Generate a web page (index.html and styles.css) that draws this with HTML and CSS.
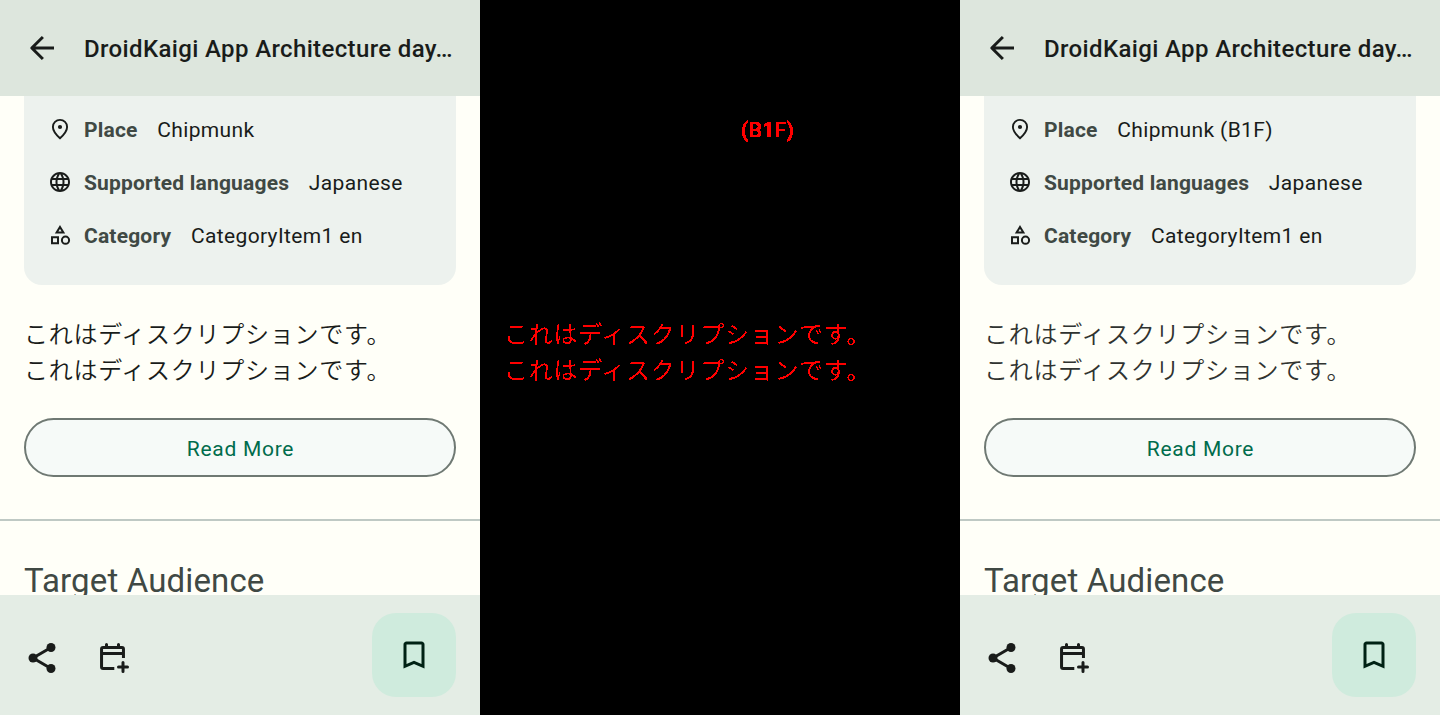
FILE: index.html
```html
<!DOCTYPE html>
<html lang="ja">
<head>
<meta charset="utf-8">
<title>DroidKaigi App Architecture day</title>
<link rel="stylesheet" href="styles.css">
</head>
<body>
<svg class="defs" width="0" height="0" aria-hidden="true">
  <defs>
    <filter id="hard" x="-5%" y="-20%" width="110%" height="140%">
      <feComponentTransfer><feFuncA type="discrete" tableValues="0 0 0 0 1 1 1 1 1 1"/></feComponentTransfer>
    </filter>
    <filter id="bold" x="-5%" y="-20%" width="110%" height="140%">
      <feComponentTransfer><feFuncA type="discrete" tableValues="0 1 1 1 1 1 1 1 1 1 1 1 1 1 1 1 1 1 1 1 1 1 1 1 1"/></feComponentTransfer>
    </filter>
    <symbol id="back" viewBox="0 0 24 24"><path d="M20 12H5.4M12.6 4.7L5.2 12l7.4 7.3" fill="none" stroke="currentColor" stroke-width="2" stroke-linejoin="round"/></symbol>
    <symbol id="place" viewBox="0 0 24 24"><path d="M12 21.2C7.5 17.1 4.9 13.4 4.9 9.9C4.9 5.7 8.1 2.9 12 2.9s7.1 2.8 7.1 7C19.1 13.4 16.5 17.1 12 21.2z" fill="none" stroke="currentColor" stroke-width="1.9"/><circle cx="12" cy="10" r="2.1" fill="currentColor"/></symbol>
    <symbol id="globe" viewBox="0 0 24 24"><path d="M11.99 2C6.47 2 2 6.48 2 12s4.47 10 9.99 10C17.52 22 22 17.52 22 12S17.52 2 11.99 2zm6.93 6h-2.95c-.32-1.25-.78-2.45-1.38-3.56 1.84.63 3.37 1.91 4.33 3.56zM12 4.04c.83 1.2 1.48 2.53 1.91 3.96h-3.82c.43-1.43 1.08-2.76 1.91-3.96zM4.26 14C4.1 13.36 4 12.69 4 12s.1-1.36.26-2h3.38c-.08.66-.14 1.32-.14 2s.06 1.34.14 2H4.26zm.82 2h2.95c.32 1.25.78 2.45 1.38 3.56-1.84-.63-3.37-1.9-4.33-3.56zm2.95-8H5.08c.96-1.66 2.49-2.93 4.33-3.56C8.81 5.55 8.35 6.75 8.03 8zM12 19.96c-.83-1.2-1.48-2.53-1.91-3.96h3.82c-.43 1.43-1.08 2.76-1.91 3.96zM14.34 14H9.66c-.09-.66-.16-1.32-.16-2s.07-1.35.16-2h4.68c.09.65.16 1.32.16 2s-.07 1.34-.16 2zm.25 5.56c.6-1.11 1.06-2.31 1.38-3.56h2.95c-.96 1.65-2.49 2.93-4.33 3.56zM16.36 14c.08-.66.14-1.32.14-2s-.06-1.34-.14-2h3.38c.16.64.26 1.31.26 2s-.1 1.36-.26 2h-3.38z" fill="currentColor"/></symbol>
    <symbol id="category" viewBox="0 0 24 24"><path d="M12 3.9L15.4 9.6H8.6zM4 14.2h6v6H4z" fill="none" stroke="currentColor" stroke-width="2"/><circle cx="17.5" cy="17.2" r="3.6" fill="none" stroke="currentColor" stroke-width="2"/></symbol>
    <symbol id="share" viewBox="0 0 24 24"><path d="M18 5L6 12l12 7" fill="none" stroke="currentColor" stroke-width="2"/><circle cx="18" cy="5" r="3" fill="currentColor"/><circle cx="6" cy="12" r="3" fill="currentColor"/><circle cx="18" cy="19" r="3" fill="currentColor"/></symbol>
    <symbol id="calendar" viewBox="0 0 24 24"><g fill="none" stroke="currentColor" stroke-width="2"><path d="M12.2 19H4.7Q3.7 19 3.7 18V6Q3.7 5 4.7 5H17.3Q18.3 5 18.3 6V12M3.7 9H18.3"/><path d="M7 5V3M15 5V3M18 15V21M15 18H21" stroke-linecap="round"/></g></symbol>
    <symbol id="bookmark" viewBox="0 0 24 24"><path d="M17 3H7c-1.1 0-2 .9-2 2v16l7-3 7 3V5c0-1.1-.9-2-2-2zm0 15l-5-2.18L7 18V5h10v13z" fill="currentColor"/></symbol>
  </defs>
</svg>
<main class="board">
  <section class="screen">
    <header class="topbar"><svg class="icon"><use href="#back"/></svg><h1 class="title">DroidKaigi App Architecture day…</h1></header>
    <div class="content">
      <div class="card">
        <div class="row"><svg class="mini"><use href="#place"/></svg><b class="label">Place</b><span>Chipmunk</span></div>
        <div class="row"><svg class="mini"><use href="#globe"/></svg><b class="label">Supported languages</b><span>Japanese</span></div>
        <div class="row"><svg class="mini"><use href="#category"/></svg><b class="label">Category</b><span>CategoryItem1 en</span></div>
      </div>
      <p class="description">これはディスクリプションです。<br>これはディスクリプションです。</p>
      <button class="more">Read More</button>
      <hr class="divider">
      <h2 class="heading">Target Audience</h2>
    </div>
    <footer class="bottombar"><svg class="icon"><use href="#share"/></svg><svg class="icon"><use href="#calendar"/></svg><span class="fab"><svg class="icon"><use href="#bookmark"/></svg></span></footer>
  </section>
  <section class="screen diff">
    <div class="diff-place">(B1F)</div>
    <p class="description diff-text">これはディスクリプションです。<br>これはディスクリプションです。</p>
  </section>
  <section class="screen">
    <header class="topbar"><svg class="icon"><use href="#back"/></svg><h1 class="title">DroidKaigi App Architecture day…</h1></header>
    <div class="content">
      <div class="card">
        <div class="row"><svg class="mini"><use href="#place"/></svg><b class="label">Place</b><span>Chipmunk (B1F)</span></div>
        <div class="row"><svg class="mini"><use href="#globe"/></svg><b class="label">Supported languages</b><span>Japanese</span></div>
        <div class="row"><svg class="mini"><use href="#category"/></svg><b class="label">Category</b><span>CategoryItem1 en</span></div>
      </div>
      <p class="description soft">これはディスクリプションです。<br>これはディスクリプションです。</p>
      <button class="more">Read More</button>
      <hr class="divider">
      <h2 class="heading">Target Audience</h2>
    </div>
    <footer class="bottombar"><svg class="icon"><use href="#share"/></svg><svg class="icon"><use href="#calendar"/></svg><span class="fab"><svg class="icon"><use href="#bookmark"/></svg></span></footer>
  </section>
</main>
</body>
</html>
```
FILE: styles.css
```css
* { box-sizing: border-box; }
body { margin: 0; font-family: Roboto, "Noto Sans CJK JP", sans-serif; color: #191c1a; overflow: hidden; }
.defs { display: block; }
.board { display: grid; grid-template-columns: repeat(3, 480px); height: 715px; }
.screen { display: flex; flex-direction: column; height: 715px; background: #fffff8; overflow: hidden; }
.topbar { flex: none; display: flex; align-items: center; gap: 24px; height: 96px; padding: 0 24px; background: #dde6dd; }
.icon { flex: none; display: block; width: 36px; height: 36px; }
.title { margin: 0; padding-top: 1px; font-size: 24px; line-height: 36px; font-weight: 500; letter-spacing: .365px; white-space: nowrap; }
.content { flex: none; height: 499px; overflow: hidden; }
.card { display: flex; flex-direction: column; gap: 23px; height: 189px; margin: 0 24px; padding: 19px 24px 0; background: #edf2ee; border-radius: 0 0 18px 18px; }
.row { display: flex; align-items: center; height: 30px; font-size: 21px; line-height: 30px; letter-spacing: .36px; white-space: nowrap; }
.mini { flex: none; width: 24px; height: 24px; margin: -3px 12px 0 0; }
.label { margin-right: 19.7px; color: #404944; font-weight: 700; letter-spacing: .19px; }
.description { margin: 30px 24px 0; font-family: "Noto Sans CJK JP", sans-serif; font-size: 24px; font-weight: 350; line-height: 36px; letter-spacing: .75px; white-space: nowrap; }
.soft { color: #303330; }
.more { display: block; width: 432px; height: 59px; margin: 31px 24px 0; padding: 2px 0 0 1px; border: 2px solid #6f7973; border-radius: 30px; background: #f6faf8; color: #006c4c; font: 400 21px/30px Roboto, sans-serif; letter-spacing: .72px; }
.divider { height: 2px; margin: 42px 0 0; border: 0; background: #bfc9c4; }
.heading { margin: 36px 24px 0; color: #404944; font-size: 33px; line-height: 48px; font-weight: 400; letter-spacing: .14px; white-space: nowrap; }
.bottombar { flex: none; display: flex; align-items: center; gap: 36px; height: 120px; padding: 0 24px; background: #e4ede5; }
.bottombar > .icon { margin-top: 6px; }
.fab { display: grid; place-items: center; width: 84px; height: 84px; margin-left: auto; background: #cfebdd; color: #002114; border-radius: 24px; }
.diff { background: #000; color: #f00; }
.diff-place { margin: 115px 0 0 261px; font-size: 21px; line-height: 30px; letter-spacing: .375px; font-weight: 500; filter: url(#bold); }
.diff-text { margin-top: 170px; filter: url(#hard); }
```
